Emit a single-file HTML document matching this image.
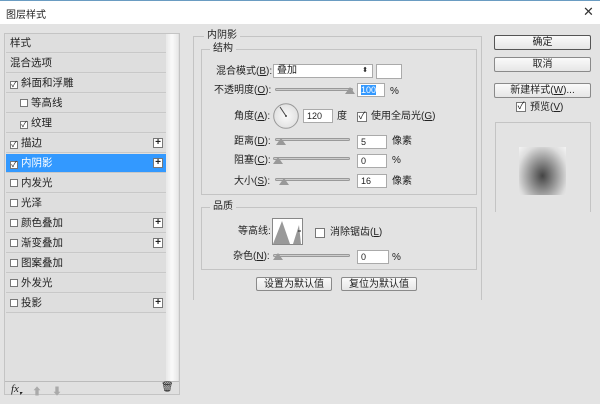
<!DOCTYPE html><html><head><meta charset="utf-8"><style>
*{margin:0;padding:0;box-sizing:border-box}
body{width:600px;height:404px;background:#e3e3e3;font-family:"Liberation Sans","Noto Sans CJK SC",sans-serif;font-size:10px;color:#222;position:relative;overflow:hidden}
.a{position:absolute}
.title{left:0;top:0;width:600px;height:24px;background:#fff;border-top:1px solid #6a9cc2}
.row{position:absolute;left:6px;width:160px;height:19px;background:#dedede;border-bottom:1px solid #c8c8c8;line-height:18px;padding-left:4px;font-size:10.5px}
.cb{display:inline-block;width:8px;height:8px;border:1px solid #777;background:#fff;vertical-align:-1px;margin-right:3px;font-size:8px;line-height:6px;text-align:center}
.plus{position:absolute;right:3px;top:4px;width:10px;height:10px;border:1px solid #777;background:#fff;font-size:10px;line-height:8px;text-align:center;font-weight:bold}
.box{position:absolute;border:1px solid #c4c4c4}
.lg{position:absolute;background:#e3e3e3;padding:0 3px;top:-7px;line-height:12px}
.in{position:absolute;background:#fff;border:1px solid #aaa;height:14px;line-height:12px;padding-left:3px;font-size:9px}
.sl{position:absolute;height:3px;border:1px solid #999;background:#ccc;border-radius:2px}
.th{position:absolute;width:0;height:0;border-left:5px solid transparent;border-right:5px solid transparent;border-bottom:7px solid #999}
.btn{position:absolute;background:linear-gradient(#fafafa,#e6e6e6);border:1px solid #8a8a8a;border-radius:2px;text-align:center;line-height:13px;font-size:10px}
.lb{position:absolute;font-size:10px;line-height:12px}
</style></head><body>
<div class="a title"><span class="a" style="left:6px;top:5px;font-size:10px">图层样式</span><span class="a" style="left:583px;top:3px;font-size:13px;color:#333">✕</span></div>
<div class="a" style="left:4px;top:33px;width:176px;height:362px;border:1px solid #c4c4c4;background:#e0e0e0"></div>
<div class="a" style="left:166px;top:34px;width:12px;height:348px;background:linear-gradient(90deg,#e8e8e8,#fafafa,#e8e8e8)"></div>
<div class="row" style="top:34px">样式</div>
<div class="row" style="top:54px">混合选项</div>
<div class="row" style="top:74px"><span class="cb">✓</span>斜面和浮雕</div>
<div class="row" style="top:94px;padding-left:14px"><span class="cb"></span>等高线</div>
<div class="row" style="top:114px;padding-left:14px"><span class="cb">✓</span>纹理</div>
<div class="row" style="top:134px"><span class="cb">✓</span>描边<span class="plus">+</span></div>
<div class="row" style="top:154px;background:#3399ff;color:#fff"><span class="cb" style="color:#222">✓</span>内阴影<span class="plus" style="color:#222">+</span></div>
<div class="row" style="top:174px"><span class="cb"></span>内发光</div>
<div class="row" style="top:194px"><span class="cb"></span>光泽</div>
<div class="row" style="top:214px"><span class="cb"></span>颜色叠加<span class="plus">+</span></div>
<div class="row" style="top:234px"><span class="cb"></span>渐变叠加<span class="plus">+</span></div>
<div class="row" style="top:254px"><span class="cb"></span>图案叠加</div>
<div class="row" style="top:274px"><span class="cb"></span>外发光</div>
<div class="row" style="top:294px"><span class="cb"></span>投影<span class="plus">+</span></div>
<div class="a" style="left:5px;top:381px;width:174px;border-top:1px solid #bbb"></div>
<span class="a" style="left:11px;top:383px;font-style:italic;font-family:'Liberation Serif',serif;font-size:11px">fx<sub style="font-size:6px">▾</sub></span>
<span class="a" style="left:32px;top:383px;color:#aaa;font-size:10px">⬆</span>
<span class="a" style="left:52px;top:383px;color:#aaa;font-size:10px">⬇</span>
<span class="a" style="left:161px;top:382px;font-size:10px">🗑</span>

<div class="box" style="left:193px;top:36px;width:289px;height:264px;border-bottom:none"><span class="lg" style="left:10px">内阴影</span></div>
<div class="box" style="left:201px;top:49px;width:276px;height:146px"><span class="lg" style="left:8px">结构</span></div>
<span class="lb" style="left:216px;top:66px">混合模式(<u>B</u>):</span>
<div class="in" style="left:273px;top:64px;width:100px;font-size:10px">叠加<span style="position:absolute;right:4px;font-size:7px">⬍</span></div>
<div class="in" style="left:376px;top:64px;width:26px;height:15px"></div>
<span class="lb" style="left:214px;top:85px">不透明度(<u>O</u>):</span>
<div class="sl" style="left:275px;top:88px;width:78px"></div><div class="th" style="left:345px;top:87px"></div>
<div class="in" style="left:357px;top:83px;width:28px"><span style="background:#3399ff;color:#fff">100</span></div>
<span class="lb" style="left:390px;top:86px">%</span>
<span class="lb" style="left:234px;top:111px">角度(<u>A</u>):</span>
<svg class="a" style="left:273px;top:103px" width="26" height="26"><defs><radialGradient id="g"><stop offset="0" stop-color="#fafafa"/><stop offset="1" stop-color="#e2e2e2"/></radialGradient></defs><circle cx="13" cy="13" r="12.3" fill="url(#g)" stroke="#999"/><path d="M13 13 L7 4" stroke="#444" stroke-width="1"/><circle cx="13" cy="13" r="1" fill="#444"/></svg>
<div class="in" style="left:303px;top:109px;width:30px">120</div>
<span class="lb" style="left:337px;top:111px">度</span>
<span class="cb a" style="left:357px;top:112px;width:10px;height:10px;font-size:10px;line-height:8px">✓</span>
<span class="lb" style="left:371px;top:111px">使用全局光(<u>G</u>)</span>
<span class="lb" style="left:234px;top:136px">距离(<u>D</u>):</span>
<div class="sl" style="left:275px;top:138px;width:75px"></div><div class="th" style="left:276px;top:138px"></div>
<div class="in" style="left:357px;top:135px;width:30px">5</div><span class="lb" style="left:392px;top:136px">像素</span>
<span class="lb" style="left:234px;top:155px">阻塞(<u>C</u>):</span>
<div class="sl" style="left:273px;top:157px;width:77px"></div><div class="th" style="left:273px;top:157px"></div>
<div class="in" style="left:357px;top:154px;width:30px">0</div><span class="lb" style="left:392px;top:155px">%</span>
<span class="lb" style="left:234px;top:176px">大小(<u>S</u>):</span>
<div class="sl" style="left:275px;top:178px;width:75px"></div><div class="th" style="left:279px;top:178px"></div>
<div class="in" style="left:357px;top:174px;width:30px">16</div><span class="lb" style="left:392px;top:176px">像素</span>

<div class="box" style="left:201px;top:207px;width:276px;height:63px"><span class="lg" style="left:8px">品质</span></div>
<span class="lb" style="left:238px;top:226px">等高线:</span>
<div class="a" style="left:272px;top:218px;width:31px;height:27px;background:#fff;border:1px solid #888">
<svg width="29" height="25" style="position:absolute;left:0;top:0"><path d="M0 25 L9 2 L17 25 Z M20 25 L26 6 L28 25 Z" fill="#999"/><path d="M25 12 h3" stroke="#222"/></svg></div>
<span class="cb a" style="left:315px;top:228px;width:10px;height:10px"></span>
<span class="lb" style="left:330px;top:227px">消除锯齿(<u>L</u>)</span>
<span class="lb" style="left:233px;top:251px">杂色(<u>N</u>):</span>
<div class="sl" style="left:273px;top:254px;width:77px"></div><div class="th" style="left:273px;top:253px"></div>
<div class="in" style="left:357px;top:250px;width:32px">0</div><span class="lb" style="left:392px;top:252px">%</span>
<div class="btn" style="left:256px;top:277px;width:76px;height:14px">设置为默认值</div>
<div class="btn" style="left:341px;top:277px;width:76px;height:14px">复位为默认值</div>

<div class="btn" style="left:494px;top:35px;width:97px;height:15px;border-color:#555">确定</div>
<div class="btn" style="left:494px;top:57px;width:97px;height:15px">取消</div>
<div class="btn" style="left:494px;top:83px;width:97px;height:15px">新建样式(<u>W</u>)...</div>
<span class="cb a" style="left:516px;top:102px;width:10px;height:10px;font-size:10px;line-height:8px">✓</span>
<span class="lb" style="left:530px;top:102px">预览(<u>V</u>)</span>
<div class="a" style="left:495px;top:122px;width:96px;height:90px;border:1px solid #c4c4c4;border-bottom:none"></div>
<div class="a" style="left:519px;top:147px;width:47px;height:48px;background:radial-gradient(ellipse at 50% 60%,#444 0,#777 25%,#aaa 50%,#ddd 75%,#f4f4f4 100%)"></div>
</body></html>
